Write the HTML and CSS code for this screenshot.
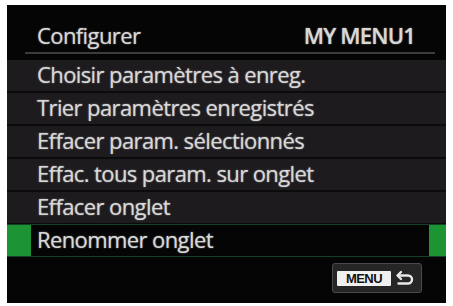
FILE: index.html
```html
<!DOCTYPE html>
<html>
<head>
<meta charset="utf-8">
<link rel="stylesheet" href="styles.css">
</head>
<body>
<div class="screen">
  <div class="header">
    <span class="title">Configurer</span>
    <span class="tab">MY MENU1</span>
  </div>
  <div class="rule"></div>
  <div class="list">
    <div class="row">Choisir paramètres à enreg.</div>
    <div class="row">Trier paramètres enregistrés</div>
    <div class="row">Effacer param. sélectionnés</div>
    <div class="row">Effac. tous param. sur onglet</div>
    <div class="row">Effacer onglet</div>
    <div class="row selected">
      <span class="mark"></span>
      <span class="label">Renommer onglet</span>
      <span class="mark right"></span>
    </div>
  </div>
  <div class="footer">
    <div class="menu-btn">
      <span class="menu-key">MENU</span>
      <svg class="back" width="20" height="18" viewBox="0 0 20 18">
        <path d="M6 3 L2.5 6.5 L6 10" fill="none" stroke="#e8e8e8" stroke-width="2.4" stroke-linejoin="round" stroke-linecap="round"/>
        <path d="M3 6.5 H13 a4 4 0 0 1 0 8 H3.5" fill="none" stroke="#e8e8e8" stroke-width="2.4" stroke-linecap="round"/>
      </svg>
    </div>
  </div>
</div>
</body>
</html>
```
FILE: styles.css
```css
html, body {
  margin: 0;
  padding: 0;
  background: #ffffff;
}
body {
  width: 453px;
  height: 306px;
  overflow: hidden;
}
.screen {
  margin: 5px 0 0 7px;
  width: 439px;
  height: 298px;
  background: #050505;
  display: flex;
  flex-direction: column;
  font-family: "Open Sans", "Noto Sans", sans-serif;
  color: #d8d8d8;
  text-shadow: 0 0 1.5px rgba(220,220,220,0.7);
}
.header {
  height: 47px;
  box-sizing: border-box;
  display: flex;
  justify-content: space-between;
  align-items: flex-end;
  padding: 0 31px 2px 30px;
  font-size: 22px;
  line-height: 30px;
  letter-spacing: -0.6px;
}
.tab {
  font-weight: 600;
  letter-spacing: -0.8px;
}
.rule {
  height: 2px;
  margin: 0 11px 0 18px;
  background: #3c3c3c;
}
.list {
  margin-top: 6px;
  display: flex;
  flex-direction: column;
}
.row {
  height: 31px;
  border-bottom: 2px solid #0b0b0b;
  background: #1d1b1d;
  display: flex;
  align-items: flex-start;
  padding-left: 30px;
  font-size: 22px;
  line-height: 28px;
  letter-spacing: -0.6px;
}
.row.selected {
  padding-left: 0;
  background: #050505;
  border-top: 1px solid #14402a;
  border-bottom: 1px solid #14402a;
  margin-top: -1px;
  align-items: stretch;
}
.mark {
  width: 24px;
  background: #1c9433;
  margin-right: 6px;
}
.mark.right {
  width: 17px;
  margin: 0 0 0 auto;
}
.footer {
  flex: 1;
  display: flex;
  justify-content: flex-end;
  align-items: flex-start;
  padding: 6px 24px 0 0;
}
.menu-btn {
  width: 90px;
  height: 30px;
  box-sizing: border-box;
  border: 1px solid #4a4a4a;
  border-radius: 3px;
  background: #262626;
  display: flex;
  align-items: center;
  padding-left: 4px;
  gap: 4px;
}
.menu-key {
  background: #f0f0f0;
  color: #111;
  font-family: "Liberation Sans", Arial, sans-serif;
  font-weight: bold;
  font-size: 13px;
  letter-spacing: -0.6px;
  height: 15px;
  line-height: 15px;
  width: 54px;
  box-sizing: border-box;
  text-align: center;
  text-shadow: none;
  border-radius: 1px;
}
.back {
  display: block;
}
```
